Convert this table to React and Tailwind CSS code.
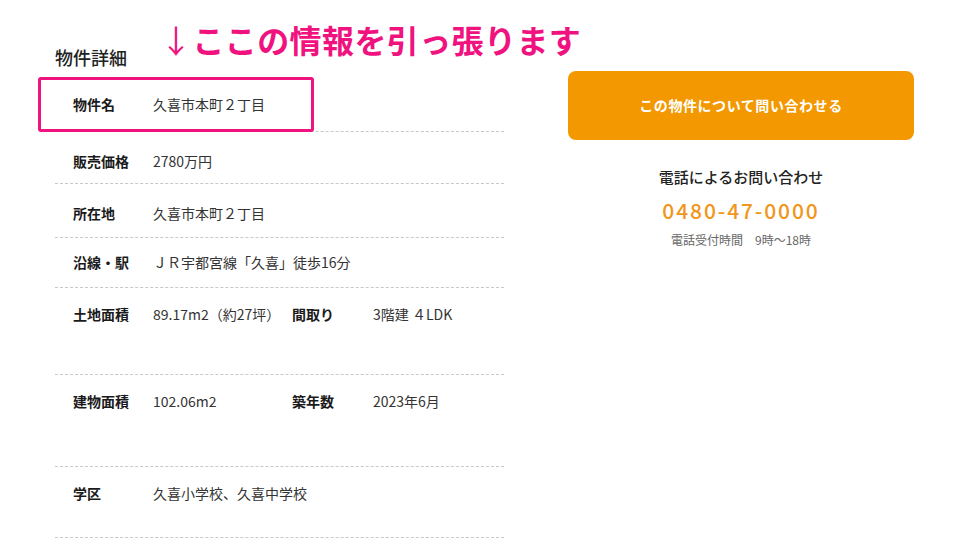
const FONT = { fontFamily: '"Noto Sans CJK JP", "Noto Sans", sans-serif' }

// row height and padding-top tuned per row to match the screenshot
const ROWS = [
  { label: '物件名', value: '久喜市本町２丁目', h: 'h-[55px]', pt: 'pt-[17px]' },
  { label: '販売価格', value: '2780万円', h: 'h-[52px]', pt: 'pt-[19px]' },
  { label: '所在地', value: '久喜市本町２丁目', h: 'h-[54px]', pt: 'pt-[19px]' },
  { label: '沿線・駅', value: 'ＪＲ宇都宮線「久喜」徒歩16分', h: 'h-[50px]', pt: 'pt-[14px]' },
  { label: '土地面積', value: '89.17m2（約27坪）', label2: '間取り', value2: '3階建 ４LDK', h: 'h-[87px]', pt: 'pt-[16px]' },
  { label: '建物面積', value: '102.06m2', label2: '築年数', value2: '2023年6月', h: 'h-[92px]', pt: 'pt-[16px]' },
  { label: '学区', value: '久喜小学校、久喜中学校', h: 'h-[71px]', pt: 'pt-[16px]' },
]

function DetailRow({ row }) {
  return (
    <div className={`${row.h} ${row.pt} flex items-start border-b border-dashed border-[#c8c8c8] pl-[18px] text-[14px] leading-[20px]`}>
      <div className="w-[80px] shrink-0 font-bold text-[#1a1a1a]">{row.label}</div>
      <div className={row.label2 ? 'w-[139px] shrink-0 text-[#333]' : 'text-[#333]'}>{row.value}</div>
      {row.label2 && (
        <>
          <div className="w-[81px] shrink-0 font-bold text-[#1a1a1a]">{row.label2}</div>
          <div className="text-[#333]">{row.value2}</div>
        </>
      )}
    </div>
  )
}

export default function App() {
  return (
    <div className="relative w-[980px] h-[554px] overflow-hidden bg-white flex" style={FONT}>
      {/* Left: property details */}
      <section className="ml-[55px] w-[449px] pt-[44px]">
        <h2 className="h-[26px] text-[18px] leading-[26px] font-medium text-[#222]">物件詳細</h2>
        <div className="mt-[7px] flex flex-col">
          {ROWS.map((row) => (
            <DetailRow key={row.label} row={row} />
          ))}
        </div>
      </section>

      {/* Right: contact */}
      <aside className="ml-[64px] w-[346px] pt-[71px] flex flex-col items-center">
        <button className="w-full h-[69px] rounded-[8px] bg-[#f39800] text-white text-[14px] font-bold tracking-[0.04em]">
          この物件について問い合わせる
        </button>
        <p className="mt-[26px] text-[15px] leading-[22px] font-medium text-[#222]">電話によるお問い合わせ</p>
        <p className="mt-[8px] text-[21px] leading-[28px] font-medium tracking-[0.09em] text-[#f0961c]">0480-47-0000</p>
        <p className="mt-[7px] text-[12px] leading-[18px] text-[#666]">電話受付時間　9時〜18時</p>
      </aside>

      {/* Annotation overlay */}
      <div className="absolute left-[160px] top-[19px] text-[32px] leading-[40px] font-bold tracking-[0.4px] text-[#f0127f]">
        <span className="font-normal">↓</span>ここの情報を引っ張ります
      </div>
      <div className="absolute left-[38px] top-[77px] w-[276px] h-[55px] rounded-[3px] border-[3px] border-[#f0127f]" />
    </div>
  )
}
